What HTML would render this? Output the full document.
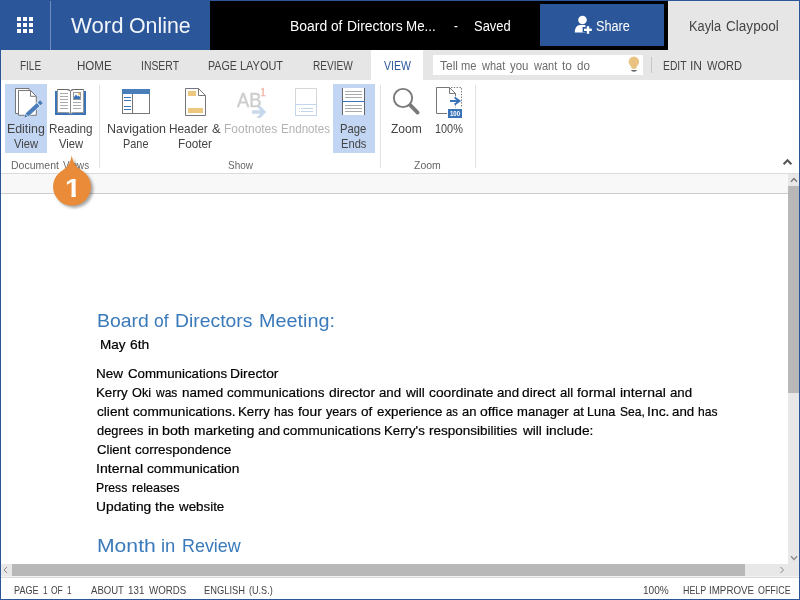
<!DOCTYPE html>
<html lang="en">
<head>
<meta charset="utf-8">
<title>Word Online</title>
<style>
*{box-sizing:border-box;margin:0;padding:0}
html,body{width:800px;height:600px;overflow:hidden;background:#fff}
body{font-family:"Liberation Sans",sans-serif;color:#444;position:relative}
.abs{position:absolute}
.t{position:absolute;white-space:nowrap;transform-origin:0 0}
#hdr{left:0;top:0;width:800px;height:50px;background:#000}
#hblue{left:0;top:0;width:210px;height:50px;background:#2b579a}
#hdiv{left:50px;top:1px;width:1px;height:49px;background:#6f8cbd}
#huser{left:668px;top:0;width:132px;height:50px;background:#e6e6e6}
#share{left:540px;top:4px;width:124px;height:42px;background:#2b579a}
.sq{position:absolute;width:4px;height:4px;background:#fff}
#tabs{left:0;top:50px;width:800px;height:30px;background:#e6e6e6}
#tabact{left:371px;top:50px;width:52px;height:30px;background:#fff}
#tell{left:433px;top:55px;width:210px;height:20px;background:#fff}
#rib{left:0;top:80px;width:800px;height:93px;background:#fff}
#ribline{left:0;top:173px;width:800px;height:1px;background:#dcdcdc}
#ruler{left:0;top:174px;width:788px;height:19px;background:#f8f8f8}
#rulerline{left:0;top:193px;width:788px;height:1px;background:#c9ccd1}
.hl{position:absolute;background:#c2d5f2}
.gdiv{position:absolute;top:85px;width:1px;height:83px;background:#e1e1e1}
#vtrack{left:788px;top:174px;width:11px;height:402px;background:#e8e8e8}
#vthumb{left:788px;top:186px;width:11px;height:207px;background:#b8b8b8}
#htrack{left:1px;top:564px;width:798px;height:12px;background:#e8e8e8;border-bottom:0}
#hthumb{left:12px;top:564px;width:733px;height:12px;background:#b8b8b8}
#statline{left:0;top:576px;width:800px;height:2px;background:#dcdcdc;border-top:1px solid #f3f3f3}
#fl{left:0;top:0;width:1px;height:600px;background:#2b579a}
#fr{left:799px;top:0;width:1px;height:600px;background:#2b579a}
#ft{left:0;top:0;width:800px;height:1px;background:#2b579a}
#fb{left:0;top:599px;width:800px;height:1px;background:#2b579a}
#ico{left:0;top:0;width:800px;height:600px}
</style>
</head>
<body>
<div id="hdr" class="abs"></div>
<div id="hblue" class="abs"></div>
<div id="hdiv" class="abs"></div>
<div id="huser" class="abs"></div>
<div id="share" class="abs"></div>
<div class="sq" style="left:17px;top:17px"></div><div class="sq" style="left:23px;top:17px"></div><div class="sq" style="left:29px;top:17px"></div>
<div class="sq" style="left:17px;top:23px"></div><div class="sq" style="left:23px;top:23px"></div><div class="sq" style="left:29px;top:23px"></div>
<div class="sq" style="left:17px;top:29px"></div><div class="sq" style="left:23px;top:29px"></div><div class="sq" style="left:29px;top:29px"></div>

<div id="tabs" class="abs"></div>
<div id="tabact" class="abs"></div>
<div id="tell" class="abs"></div>
<div class="abs" style="left:651px;top:57px;width:1px;height:16px;background:#c6c6c6"></div>

<div id="rib" class="abs"></div>
<div class="hl" style="left:5px;top:84px;width:42px;height:69px"></div>
<div class="hl" style="left:333px;top:84px;width:42px;height:69px"></div>
<div class="gdiv" style="left:99px"></div>
<div class="gdiv" style="left:380px"></div>
<div class="gdiv" style="left:475px"></div>
<div id="ribline" class="abs"></div>
<div id="ruler" class="abs"></div>
<div id="rulerline" class="abs"></div>

<div id="vtrack" class="abs"></div>
<div id="vthumb" class="abs"></div>
<div id="htrack" class="abs"></div>
<div id="hthumb" class="abs"></div>
<div id="statline" class="abs"></div>

<svg id="ico" class="abs" viewBox="0 0 800 600">
<!-- share person+ icon -->
<g fill="#fff">
<circle cx="582.5" cy="20" r="4.3"/>
<path d="M574.8 32.5 C574.8 27.5 577 25 580.5 25 L584 25 C585.2 25 586 25.4 586.6 26 L586.6 32.5 Z"/>
<rect x="582.6" y="27" width="10.4" height="5.4" fill="#2b579a"/>
<rect x="585.4" y="25" width="5" height="10" fill="#2b579a"/>
<rect x="584" y="28.6" width="7.8" height="2.4"/>
<rect x="586.8" y="26.2" width="2.4" height="7.6"/>
</g>
<!-- lightbulb -->
<path d="M633.9 56.5 a5.25 5.25 0 0 1 5.25 5.25 c0 2.2 -1.6 3.6 -2.6 5.2 l-0.55 1.8 h-4.2 l-0.55 -1.8 c-1 -1.6 -2.6 -3 -2.6 -5.2 a5.25 5.25 0 0 1 5.25 -5.25z" fill="#eac282"/>
<path d="M631 70 h6 l-0.9 1.3 q-2.1 .8 -4.2 0z" fill="#666"/>
<!-- Editing view icon -->
<path d="M15.5 88.5 h13.5 v2 h-10.5 v23 h-3z" fill="#fff" stroke="#777" stroke-width="1" stroke-linejoin="miter"/>
<path d="M18.5 90.5 h12 l5.8 5.8 v19 h-17.8z" fill="#fff" stroke="#777" stroke-width="1"/>
<path d="M30.5 90.5 v5.8 h5.8" fill="none" stroke="#777" stroke-width="1"/>
<g transform="translate(24.2 117.5) rotate(-42.6)">
<path d="M-0.5 0 L3.4 -2.6 H23.6 V2.6 H3.4 Z" fill="#fff" opacity=".9"/>
<path d="M0 0 L3 -1.9 L3 1.9 Z" fill="#4a7ebb"/>
<rect x="3.7" y="-2.1" width="15.4" height="4.2" fill="#4a7ebb"/>
<rect x="20" y="-2.1" width="3.5" height="4.2" fill="#4a7ebb"/>
</g>
<!-- Reading view icon -->
<rect x="55" y="91" width="31" height="24" fill="#3b73b9"/>
<path d="M57.5 89.5 h9 q3 0 4 1.5 q1 -1.5 4 -1.5 h9 v23 h-9 q-3 0 -4 1.3 q-1 -1.3 -4 -1.3 h-9z" fill="#fff" stroke="#999" stroke-width="1"/>
<path d="M57.5 89.5 h9 q3 0 4 1.5 q1 -1.5 4 -1.5 h9" fill="none" stroke="#666" stroke-width="1"/>
<path d="M70.5 91 v22.5" stroke="#888" stroke-width="1"/>
<g stroke="#aaa" stroke-width="1">
<path d="M60 93.5h8M60 96.5h8M60 99.5h8M60 102.5h8M60 105.5h8M60 108.5h8M73 102.5h8M73 105.5h8M73 108.5h8"/>
</g>
<rect x="73.5" y="92.5" width="7" height="7" fill="#fff" stroke="#999" stroke-width="1"/>
<path d="M74 99 v-2 l2 -2.4 l1.6 1.8 l1 -.8 l1.4 1.4 v2z" fill="#3b73b9"/>
<rect x="78.4" y="93" width="1.8" height="1.8" fill="#f2b24a"/>
<!-- Navigation pane icon -->
<rect x="122.5" y="89.5" width="27" height="24" fill="#fff" stroke="#777" stroke-width="1"/>
<rect x="122" y="89" width="28" height="5" fill="#4a7ebb"/>
<rect x="132" y="94" width="1" height="19.5" fill="#777"/>
<g fill="#3b73b9"><rect x="124" y="97" width="7" height="1"/><rect x="124" y="100" width="7" height="1"/><rect x="124" y="106" width="7" height="1"/><rect x="124" y="109" width="7" height="1"/></g>
<!-- Header & Footer icon -->
<path d="M185.5 88.5 h13 l7 7 v20 h-20z" fill="#fff" stroke="#777" stroke-width="1"/>
<path d="M198.5 88.5 v7 h7" fill="none" stroke="#777" stroke-width="1"/>
<rect x="188" y="91" width="8" height="5" fill="#eec77e"/>
<rect x="188" y="108" width="15" height="5" fill="#eec77e"/>
<!-- Footnotes arrow -->
<path d="M252 110.2 h8.2 l-3.9 -4.1 h4.2 l5.7 5.9 l-5.7 5.9 h-4.2 l3.9 -4.1 h-8.2z" fill="#c9d9ec"/>
<!-- Endnotes icon -->
<path d="M295.5 104.5 v-16 h21 v16" fill="none" stroke="#d6d6d6" stroke-width="1"/>
<rect x="295.5" y="104.5" width="21" height="11" fill="#fff" stroke="#c5d5ea" stroke-width="1"/>
<g fill="#c5d5ea"><rect x="299" y="108" width="1" height="1"/><rect x="301" y="108" width="12" height="1"/><rect x="299" y="111" width="1" height="1"/><rect x="301" y="111" width="12" height="1"/></g>
<!-- Page ends icon -->
<rect x="342" y="88" width="23" height="27" fill="#fff"/>
<rect x="342" y="88" width="1" height="27" fill="#666"/><rect x="364" y="88" width="1" height="27" fill="#666"/>
<g fill="#aaa"><rect x="345" y="91" width="17" height="1"/><rect x="345" y="94" width="17" height="1"/><rect x="345" y="97" width="17" height="1"/><rect x="345" y="105" width="17" height="1"/><rect x="345" y="108" width="17" height="1"/><rect x="345" y="111" width="17" height="1"/></g>
<rect x="342" y="101" width="23" height="1" fill="#3b73b9"/>
<!-- Zoom icon -->
<circle cx="403" cy="98" r="9.15" fill="none" stroke="#7a7a7a" stroke-width="1.9"/>
<path d="M410.3 105.2 L417.6 112.6" stroke="#7a7a7a" stroke-width="3.8" stroke-linecap="round"/>
<!-- 100% icon -->
<path d="M447 113.5 h-10.5 v-26 h13 l6 6 v3" fill="none" stroke="#777" stroke-width="1"/>
<path d="M449.5 87.5 v6 h6" fill="none" stroke="#777" stroke-width="1"/>
<path d="M451 87.5 h10.5 v20" fill="none" stroke="#777" stroke-width="1" stroke-dasharray="1.4 1.4"/>
<path d="M455.5 104.5 v3" fill="none" stroke="#777" stroke-width="1" stroke-dasharray="1.2 1.2"/>
<path d="M450 101 h9" stroke="#3b73b9" stroke-width="2"/>
<path d="M454.6 97.4 L459.6 101 L454.6 104.6" fill="none" stroke="#3b73b9" stroke-width="1.9"/>
<rect x="448" y="109" width="14" height="9" fill="#3b73b9"/>
<!-- collapse chevron -->
<path d="M783.6 164.2 l3.9 -4 l3.9 4" fill="none" stroke="#555" stroke-width="2"/>
<!-- scrollbar arrows -->
<path d="M791 181.7 l3 -3.2 l3 3.2" fill="none" stroke="#777" stroke-width="1.3"/>
<path d="M791 556.3 l3 3.2 l3 -3.2" fill="none" stroke="#8a8a8a" stroke-width="1.3"/>
<path d="M7 567 l-3 3 l3 3" fill="none" stroke="#888" stroke-width="1"/>
<path d="M780.5 567 l3 3 l-3 3" fill="none" stroke="#888" stroke-width="1"/>

</svg>

<div class="t" style='left:71.40px;top:10px;font-size:21.8px;line-height:31px;color:#f2f5fa;transform:scaleX(1.0146)'>Word</div>
<div class="t" style='left:128.78px;top:10px;font-size:21.8px;line-height:31px;color:#f2f5fa;transform:scaleX(0.9799)'>Online</div>
<div class="t" style='left:289.70px;top:16px;font-size:14px;line-height:20px;color:#fff;transform:scaleX(0.9955)'>Board</div>
<div class="t" style='left:331.16px;top:16px;font-size:14px;line-height:20px;color:#fff;transform:scaleX(0.9706)'>of</div>
<div class="t" style='left:346.66px;top:16px;font-size:14px;line-height:20px;color:#fff;transform:scaleX(0.9937)'>Directors</div>
<div class="t" style='left:406.41px;top:16px;font-size:14px;line-height:20px;color:#fff;transform:scaleX(0.9557)'>Me...</div>
<div class="t" style='left:453.90px;top:16px;font-size:14px;line-height:20px;color:#fff;transform:scaleX(0.8200)'>-</div>
<div class="t" style='left:474.00px;top:16px;font-size:14px;line-height:20px;color:#fff;transform:scaleX(0.9252)'>Saved</div>
<div class="t" style='left:596.00px;top:16px;font-size:14px;line-height:20px;color:#fff;transform:scaleX(0.9049)'>Share</div>
<div class="t" style='left:688.59px;top:16px;font-size:14px;line-height:20px;color:#444;transform:scaleX(0.9137)'>Kayla</div>
<div class="t" style='left:725.81px;top:16px;font-size:14px;line-height:20px;color:#444;transform:scaleX(0.9692)'>Claypool</div>
<div class="t" style='left:19.70px;top:57px;font-size:12.5px;line-height:18px;color:#444;transform:scaleX(0.7981)'>FILE</div>
<div class="t" style='left:77.37px;top:57px;font-size:12.5px;line-height:18px;color:#444;transform:scaleX(0.9264)'>HOME</div>
<div class="t" style='left:140.67px;top:57px;font-size:12.5px;line-height:18px;color:#444;transform:scaleX(0.8338)'>INSERT</div>
<div class="t" style='left:207.95px;top:57px;font-size:12.5px;line-height:18px;color:#444;transform:scaleX(0.8495)'>PAGE</div>
<div class="t" style='left:240.00px;top:57px;font-size:12.5px;line-height:18px;color:#444;transform:scaleX(0.8757)'>LAYOUT</div>
<div class="t" style='left:312.99px;top:57px;font-size:12.5px;line-height:18px;color:#444;transform:scaleX(0.8080)'>REVIEW</div>
<div class="t" style='left:662.68px;top:57px;font-size:12.5px;line-height:18px;color:#444;transform:scaleX(0.8249)'>EDIT</div>
<div class="t" style='left:690.01px;top:57px;font-size:12.5px;line-height:18px;color:#444;transform:scaleX(0.9647)'>IN</div>
<div class="t" style='left:706.56px;top:57px;font-size:12.5px;line-height:18px;color:#444;transform:scaleX(0.8835)'>WORD</div>
<div class="t" style='left:383.75px;top:57px;font-size:12.5px;line-height:18px;color:#2b579a;transform:scaleX(0.8399)'>VIEW</div>
<div class="t" style='left:439.50px;top:57px;font-size:12.5px;line-height:18px;color:#6c6c6c;transform:scaleX(0.9591)'>Tell</div>
<div class="t" style='left:461.24px;top:57px;font-size:12.5px;line-height:18px;color:#6c6c6c;transform:scaleX(0.8886)'>me</div>
<div class="t" style='left:482.10px;top:57px;font-size:12.5px;line-height:18px;color:#6c6c6c;transform:scaleX(0.8787)'>what</div>
<div class="t" style='left:510.26px;top:57px;font-size:12.5px;line-height:18px;color:#6c6c6c;transform:scaleX(0.9162)'>you</div>
<div class="t" style='left:534.15px;top:57px;font-size:12.5px;line-height:18px;color:#6c6c6c;transform:scaleX(0.8787)'>want</div>
<div class="t" style='left:562.31px;top:57px;font-size:12.5px;line-height:18px;color:#6c6c6c;transform:scaleX(0.9494)'>to</div>
<div class="t" style='left:576.76px;top:57px;font-size:12.5px;line-height:18px;color:#6c6c6c;transform:scaleX(0.9277)'>do</div>
<div class="t" style='left:6.74px;top:121px;font-size:12.2px;line-height:17px;color:#444;transform:scaleX(1.0145)'>Editing</div>
<div class="t" style='left:13.75px;top:136px;font-size:12.2px;line-height:17px;color:#444;transform:scaleX(0.9188)'>View</div>
<div class="t" style='left:49.04px;top:121px;font-size:12.2px;line-height:17px;color:#444;transform:scaleX(0.9605)'>Reading</div>
<div class="t" style='left:58.75px;top:136px;font-size:12.2px;line-height:17px;color:#444;transform:scaleX(0.9188)'>View</div>
<div class="t" style='left:106.78px;top:121px;font-size:12.2px;line-height:17px;color:#444;transform:scaleX(1.0249)'>Navigation</div>
<div class="t" style='left:123.11px;top:136px;font-size:12.2px;line-height:17px;color:#444;transform:scaleX(0.8940)'>Pane</div>
<div class="t" style='left:168.93px;top:121px;font-size:12.2px;line-height:17px;color:#444;transform:scaleX(0.9678)'>Header</div>
<div class="t" style='left:212.09px;top:121px;font-size:12.2px;line-height:17px;color:#444;transform:scaleX(1.0640)'>&amp;</div>
<div class="t" style='left:177.83px;top:136px;font-size:12.2px;line-height:17px;color:#444;transform:scaleX(0.9659)'>Footer</div>
<div class="t" style='left:340.48px;top:121px;font-size:12.2px;line-height:17px;color:#444;transform:scaleX(0.9247)'>Page</div>
<div class="t" style='left:341.09px;top:136px;font-size:12.2px;line-height:17px;color:#444;transform:scaleX(0.9144)'>Ends</div>
<div class="t" style='left:391.40px;top:121px;font-size:12.2px;line-height:17px;color:#444;transform:scaleX(0.9871)'>Zoom</div>
<div class="t" style='left:435.00px;top:121px;font-size:12.2px;line-height:17px;color:#444;transform:scaleX(0.8936)'>100%</div>
<div class="t" style='left:224.02px;top:121px;font-size:12.2px;line-height:17px;color:#b3b3b3;transform:scaleX(0.9829)'>Footnotes</div>
<div class="t" style='left:281.45px;top:121px;font-size:12.2px;line-height:17px;color:#b3b3b3;transform:scaleX(0.9523)'>Endnotes</div>
<div class="t" style='left:11.00px;top:158px;font-size:10.6px;line-height:15px;color:#666;transform:scaleX(0.9930)'>Document</div>
<div class="t" style='left:63.13px;top:158px;font-size:10.6px;line-height:15px;color:#666;transform:scaleX(0.9316)'>Views</div>
<div class="t" style='left:227.75px;top:158px;font-size:10.6px;line-height:15px;color:#666;transform:scaleX(0.9404)'>Show</div>
<div class="t" style='left:414.00px;top:158px;font-size:10.6px;line-height:15px;color:#666;transform:scaleX(0.9907)'>Zoom</div>
<div class="t" style='left:237.20px;top:87px;font-size:19.4px;line-height:27px;color:#cdcdcd;transform:scaleX(0.9465);-webkit-text-stroke:.4px #cdcdcd'>AB</div>
<div class="t" style='left:260.36px;top:83px;font-size:13px;line-height:18px;color:#f0b3a3;transform:scaleX(0.9400);font-family:"Liberation Serif", serif;-webkit-text-stroke:.3px #f0b3a3'>1</div>
<div class="t" style='left:450.00px;top:109px;font-size:7px;line-height:10px;color:#fff;transform:scaleX(0.8654);font-weight:bold'>100</div>
<div class="t" style='left:97.13px;top:309px;font-size:18.2px;line-height:25px;color:#3a7aba;transform:scaleX(1.0686)'>Board</div>
<div class="t" style='left:154.20px;top:309px;font-size:18.2px;line-height:25px;color:#3a7aba;transform:scaleX(0.9618)'>of</div>
<div class="t" style='left:175.14px;top:309px;font-size:18.2px;line-height:25px;color:#3a7aba;transform:scaleX(1.0633)'>Directors</div>
<div class="t" style='left:258.91px;top:309px;font-size:18.2px;line-height:25px;color:#3a7aba;transform:scaleX(1.0886)'>Meeting:</div>
<div class="t" style='left:100.36px;top:336px;font-size:13px;line-height:18px;color:#000;transform:scaleX(1.0384);-webkit-text-stroke:.2px #000'>May</div>
<div class="t" style='left:130.11px;top:336px;font-size:13px;line-height:18px;color:#000;transform:scaleX(1.0646);-webkit-text-stroke:.2px #000'>6th</div>
<div class="t" style='left:96.26px;top:365px;font-size:13px;line-height:18px;color:#000;transform:scaleX(1.0415);-webkit-text-stroke:.2px #000'>New</div>
<div class="t" style='left:127.78px;top:365px;font-size:13px;line-height:18px;color:#000;transform:scaleX(1.0234);-webkit-text-stroke:.2px #000'>Communications</div>
<div class="t" style='left:230.12px;top:365px;font-size:13px;line-height:18px;color:#000;transform:scaleX(1.0650);-webkit-text-stroke:.2px #000'>Director</div>
<div class="t" style='left:96.28px;top:384px;font-size:13px;line-height:18px;color:#000;transform:scaleX(1.0230);-webkit-text-stroke:.2px #000'>Kerry</div>
<div class="t" style='left:132.37px;top:384px;font-size:13px;line-height:18px;color:#000;transform:scaleX(0.9795);-webkit-text-stroke:.2px #000'>Oki</div>
<div class="t" style='left:156.31px;top:384px;font-size:13px;line-height:18px;color:#000;transform:scaleX(0.9225);-webkit-text-stroke:.2px #000'>was</div>
<div class="t" style='left:181.91px;top:384px;font-size:13px;line-height:18px;color:#000;transform:scaleX(1.0345);-webkit-text-stroke:.2px #000'>named</div>
<div class="t" style='left:226.60px;top:384px;font-size:13px;line-height:18px;color:#000;transform:scaleX(1.0393);-webkit-text-stroke:.2px #000'>communications</div>
<div class="t" style='left:328.54px;top:384px;font-size:13px;line-height:18px;color:#000;transform:scaleX(1.0648);-webkit-text-stroke:.2px #000'>director</div>
<div class="t" style='left:379.22px;top:384px;font-size:13px;line-height:18px;color:#000;transform:scaleX(1.0200);-webkit-text-stroke:.2px #000'>and</div>
<div class="t" style='left:405.97px;top:384px;font-size:13px;line-height:18px;color:#000;transform:scaleX(1.0451);-webkit-text-stroke:.2px #000'>will</div>
<div class="t" style='left:428.76px;top:384px;font-size:13px;line-height:18px;color:#000;transform:scaleX(1.0612);-webkit-text-stroke:.2px #000'>coordinate</div>
<div class="t" style='left:496.75px;top:384px;font-size:13px;line-height:18px;color:#000;transform:scaleX(1.0200);-webkit-text-stroke:.2px #000'>and</div>
<div class="t" style='left:522.45px;top:384px;font-size:13px;line-height:18px;color:#000;transform:scaleX(1.0580);-webkit-text-stroke:.2px #000'>direct</div>
<div class="t" style='left:560.30px;top:384px;font-size:13px;line-height:18px;color:#000;transform:scaleX(1.0078);-webkit-text-stroke:.2px #000'>all</div>
<div class="t" style='left:577.33px;top:384px;font-size:13px;line-height:18px;color:#000;transform:scaleX(1.0726);-webkit-text-stroke:.2px #000'>formal</div>
<div class="t" style='left:620.00px;top:384px;font-size:13px;line-height:18px;color:#000;transform:scaleX(1.0738);-webkit-text-stroke:.2px #000'>internal</div>
<div class="t" style='left:669.71px;top:384px;font-size:13px;line-height:18px;color:#000;transform:scaleX(1.0200);-webkit-text-stroke:.2px #000'>and</div>
<div class="t" style='left:97.30px;top:403px;font-size:13px;line-height:18px;color:#000;transform:scaleX(1.0509);-webkit-text-stroke:.2px #000'>client</div>
<div class="t" style='left:133.41px;top:403px;font-size:13px;line-height:18px;color:#000;transform:scaleX(1.0510);-webkit-text-stroke:.2px #000'>communications.</div>
<div class="t" style='left:238.07px;top:403px;font-size:13px;line-height:18px;color:#000;transform:scaleX(1.0234);-webkit-text-stroke:.2px #000'>Kerry</div>
<div class="t" style='left:274.18px;top:403px;font-size:13px;line-height:18px;color:#000;transform:scaleX(0.9290);-webkit-text-stroke:.2px #000'>has</div>
<div class="t" style='left:297.93px;top:403px;font-size:13px;line-height:18px;color:#000;transform:scaleX(1.0616);-webkit-text-stroke:.2px #000'>four</div>
<div class="t" style='left:326.23px;top:403px;font-size:13px;line-height:18px;color:#000;transform:scaleX(0.9691);-webkit-text-stroke:.2px #000'>years</div>
<div class="t" style='left:361.34px;top:403px;font-size:13px;line-height:18px;color:#000;transform:scaleX(1.0408);-webkit-text-stroke:.2px #000'>of</div>
<div class="t" style='left:376.83px;top:403px;font-size:13px;line-height:18px;color:#000;transform:scaleX(1.0269);-webkit-text-stroke:.2px #000'>experience</div>
<div class="t" style='left:445.72px;top:403px;font-size:13px;line-height:18px;color:#000;transform:scaleX(0.8605);-webkit-text-stroke:.2px #000'>as</div>
<div class="t" style='left:461.78px;top:403px;font-size:13px;line-height:18px;color:#000;transform:scaleX(0.9985);-webkit-text-stroke:.2px #000'>an</div>
<div class="t" style='left:479.79px;top:403px;font-size:13px;line-height:18px;color:#000;transform:scaleX(1.0783);-webkit-text-stroke:.2px #000'>office</div>
<div class="t" style='left:516.61px;top:403px;font-size:13px;line-height:18px;color:#000;transform:scaleX(1.0050);-webkit-text-stroke:.2px #000'>manager</div>
<div class="t" style='left:572.66px;top:403px;font-size:13px;line-height:18px;color:#000;transform:scaleX(1.0174);-webkit-text-stroke:.2px #000'>at</div>
<div class="t" style='left:586.92px;top:403px;font-size:13px;line-height:18px;color:#000;transform:scaleX(0.9778);-webkit-text-stroke:.2px #000'>Luna</div>
<div class="t" style='left:619.76px;top:403px;font-size:13px;line-height:18px;color:#000;transform:scaleX(0.9261);-webkit-text-stroke:.2px #000'>Sea,</div>
<div class="t" style='left:646.70px;top:403px;font-size:13px;line-height:18px;color:#000;transform:scaleX(1.0739);-webkit-text-stroke:.2px #000'>Inc.</div>
<div class="t" style='left:672.35px;top:403px;font-size:13px;line-height:18px;color:#000;transform:scaleX(1.0205);-webkit-text-stroke:.2px #000'>and</div>
<div class="t" style='left:698.06px;top:403px;font-size:13px;line-height:18px;color:#000;transform:scaleX(0.9290);-webkit-text-stroke:.2px #000'>has</div>
<div class="t" style='left:97.30px;top:422px;font-size:13px;line-height:18px;color:#000;transform:scaleX(0.9862);-webkit-text-stroke:.2px #000'>degrees</div>
<div class="t" style='left:147.93px;top:422px;font-size:13px;line-height:18px;color:#000;transform:scaleX(1.0666);-webkit-text-stroke:.2px #000'>in</div>
<div class="t" style='left:162.29px;top:422px;font-size:13px;line-height:18px;color:#000;transform:scaleX(1.0974);-webkit-text-stroke:.2px #000'>both</div>
<div class="t" style='left:193.62px;top:422px;font-size:13px;line-height:18px;color:#000;transform:scaleX(1.0582);-webkit-text-stroke:.2px #000'>marketing</div>
<div class="t" style='left:257.59px;top:422px;font-size:13px;line-height:18px;color:#000;transform:scaleX(1.0206);-webkit-text-stroke:.2px #000'>and</div>
<div class="t" style='left:283.30px;top:422px;font-size:13px;line-height:18px;color:#000;transform:scaleX(1.0399);-webkit-text-stroke:.2px #000'>communications</div>
<div class="t" style='left:384.28px;top:422px;font-size:13px;line-height:18px;color:#000;transform:scaleX(1.0178);-webkit-text-stroke:.2px #000'>Kerry's</div>
<div class="t" style='left:429.36px;top:422px;font-size:13px;line-height:18px;color:#000;transform:scaleX(1.0363);-webkit-text-stroke:.2px #000'>responsibilities</div>
<div class="t" style='left:523.09px;top:422px;font-size:13px;line-height:18px;color:#000;transform:scaleX(1.0457);-webkit-text-stroke:.2px #000'>will</div>
<div class="t" style='left:545.89px;top:422px;font-size:13px;line-height:18px;color:#000;transform:scaleX(1.0568);-webkit-text-stroke:.2px #000'>include:</div>
<div class="t" style='left:97.30px;top:441px;font-size:13px;line-height:18px;color:#000;transform:scaleX(1.0088);-webkit-text-stroke:.2px #000'>Client</div>
<div class="t" style='left:135.03px;top:441px;font-size:13px;line-height:18px;color:#000;transform:scaleX(1.0319);-webkit-text-stroke:.2px #000'>correspondence</div>
<div class="t" style='left:96.21px;top:460px;font-size:13px;line-height:18px;color:#000;transform:scaleX(1.0852);-webkit-text-stroke:.2px #000'>Internal</div>
<div class="t" style='left:147.19px;top:460px;font-size:13px;line-height:18px;color:#000;transform:scaleX(1.0564);-webkit-text-stroke:.2px #000'>communication</div>
<div class="t" style='left:96.36px;top:479px;font-size:13px;line-height:18px;color:#000;transform:scaleX(0.9409);-webkit-text-stroke:.2px #000'>Press</div>
<div class="t" style='left:131.89px;top:479px;font-size:13px;line-height:18px;color:#000;transform:scaleX(0.9692);-webkit-text-stroke:.2px #000'>releases</div>
<div class="t" style='left:96.24px;top:498px;font-size:13px;line-height:18px;color:#000;transform:scaleX(1.0624);-webkit-text-stroke:.2px #000'>Updating</div>
<div class="t" style='left:155.08px;top:498px;font-size:13px;line-height:18px;color:#000;transform:scaleX(1.0833);-webkit-text-stroke:.2px #000'>the</div>
<div class="t" style='left:179.23px;top:498px;font-size:13px;line-height:18px;color:#000;transform:scaleX(1.0278);-webkit-text-stroke:.2px #000'>website</div>
<div class="t" style='left:96.84px;top:534px;font-size:18.2px;line-height:25px;color:#3a7aba;transform:scaleX(1.1624)'>Month</div>
<div class="t" style='left:160.59px;top:534px;font-size:18.2px;line-height:25px;color:#3a7aba;transform:scaleX(1.0132)'>in</div>
<div class="t" style='left:181.62px;top:534px;font-size:18.2px;line-height:25px;color:#3a7aba;transform:scaleX(0.9849)'>Review</div>
<div class="t" style='left:14.25px;top:583px;font-size:11px;line-height:15px;color:#444;transform:scaleX(0.8265)'>PAGE</div>
<div class="t" style='left:42.68px;top:583px;font-size:11px;line-height:15px;color:#444;transform:scaleX(0.7561)'>1</div>
<div class="t" style='left:51.33px;top:583px;font-size:11px;line-height:15px;color:#444;transform:scaleX(0.7726)'>OF</div>
<div class="t" style='left:67.46px;top:583px;font-size:11px;line-height:15px;color:#444;transform:scaleX(0.7561)'>1</div>
<div class="t" style='left:91.00px;top:583px;font-size:11px;line-height:15px;color:#444;transform:scaleX(0.8695)'>ABOUT</div>
<div class="t" style='left:128.35px;top:583px;font-size:11px;line-height:15px;color:#444;transform:scaleX(0.8923)'>131</div>
<div class="t" style='left:148.79px;top:583px;font-size:11px;line-height:15px;color:#444;transform:scaleX(0.8801)'>WORDS</div>
<div class="t" style='left:203.60px;top:583px;font-size:11px;line-height:15px;color:#444;transform:scaleX(0.8486)'>ENGLISH</div>
<div class="t" style='left:248.78px;top:583px;font-size:11px;line-height:15px;color:#444;transform:scaleX(0.8241)'>(U.S.)</div>
<div class="t" style='left:642.50px;top:583px;font-size:11px;line-height:15px;color:#444;transform:scaleX(0.9170)'>100%</div>
<div class="t" style='left:682.70px;top:583px;font-size:11px;line-height:15px;color:#444;transform:scaleX(0.8074)'>HELP</div>
<div class="t" style='left:708.88px;top:583px;font-size:11px;line-height:15px;color:#444;transform:scaleX(0.8899)'>IMPROVE</div>
<div class="t" style='left:757.87px;top:583px;font-size:11px;line-height:15px;color:#444;transform:scaleX(0.8083)'>OFFICE</div>
<svg id="pin" class="abs" style="left:0;top:0;width:800px;height:600px" viewBox="0 0 800 600">
<!-- marker pin -->
<defs><filter id="sh" x="-30%" y="-30%" width="170%" height="170%"><feGaussianBlur stdDeviation="1.6"/></filter></defs>
<path d="M71.7 155.3 C73 162 75.2 166.6 81 170 A19 19 0 1 1 63 170 C68.6 166.6 70.6 162 71.7 155.3Z" transform="translate(2.2 2.2)" fill="#000" opacity=".35" filter="url(#sh)"/>
<path d="M71.7 155.3 C73 162 75.2 166.6 81 170 A19 19 0 1 1 63 170 C68.6 166.6 70.6 162 71.7 155.3Z" fill="#e98b38"/>

</svg>
<div class="t" style="left:65.05px;top:173.34px;font-size:25.0px;line-height:30px;font-weight:bold;color:#fff;transform:scaleX(1.14);clip-path:polygon(0 0,100% 0,100% 20.31px,9.47px 20.31px,9.47px 100%,5.63px 100%,5.63px 20.31px,0 20.31px)">1</div>

<div id="fl" class="abs"></div><div id="fr" class="abs"></div><div id="ft" class="abs"></div><div id="fb" class="abs"></div>
</body>
</html>
